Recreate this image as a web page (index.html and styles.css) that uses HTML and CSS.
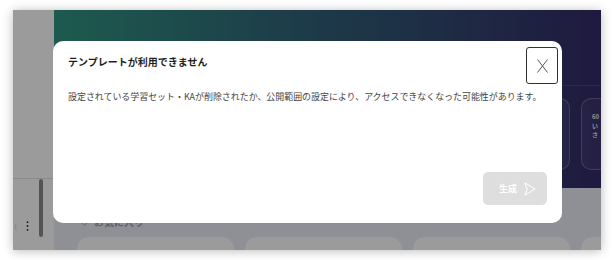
FILE: index.html
```html
<!DOCTYPE html>
<html lang="ja">
<head>
  <meta charset="UTF-8" />
  <meta name="viewport" content="width=device-width, initial-scale=1.0" />
  <title>テンプレートが利用できません</title>
  <link rel="stylesheet" href="styles.css">
</head>
<body>
  <div class="window">
    <aside class="sidebar">
      <div class="side-item">
        <span class="side-label">t</span>
        <span class="kebab">
          <svg width="3" height="10" viewBox="0 0 3 10"><circle cx="1.5" cy="1.2" r="0.9"/><circle cx="1.5" cy="5" r="0.9"/><circle cx="1.5" cy="8.8" r="0.9"/></svg>
        </span>
        <span class="scroll-thumb"></span>
      </div>
    </aside>

    <main class="main">
      <section class="hero">
        <div class="hero-top"></div>
        <div class="hero-cards">
          <div class="hero-card"></div>
          <div class="hero-card"></div>
          <div class="hero-card"></div>
          <div class="hero-card">
            <p>60</p>
            <p>い</p>
            <p>さ</p>
          </div>
        </div>
      </section>

      <section class="favs">
        <h4 class="favs-title">
          <svg width="9" height="8" viewBox="0 0 10 9"><path d="M5 8.2 1.3 4.6A2.2 2.2 0 0 1 5 1.6a2.2 2.2 0 0 1 3.7 3Z" fill="none" stroke="currentColor" stroke-width="1"/></svg>
          お気に入り
        </h4>
        <div class="fav-cards">
          <div class="fav-card"></div>
          <div class="fav-card"></div>
          <div class="fav-card"></div>
          <div class="fav-card"></div>
        </div>
      </section>
    </main>

    <div class="overlay"></div>

    <div class="modal">
      <div class="modal-head">
        <h3 class="modal-title">テンプレートが利用できません</h3>
        <button class="close-btn">
          <svg width="11" height="14" viewBox="0 0 11 14"><path d="M0.5 0.5 10.5 13.5M10.5 0.5 0.5 13.5" stroke="#555" stroke-width="1" fill="none"/></svg>
        </button>
      </div>
      <p class="modal-text">設定されている学習セット・KAが削除されたか、公開範囲の設定により、アクセスできなくなった可能性があります。</p>
      <div class="modal-foot">
        <button class="gen-btn">
          生成
          <svg width="12" height="14" viewBox="0 0 12 14"><path d="M0.8 0.8 11.2 7 0.8 13.2 3.2 7Z" fill="none" stroke="#fff" stroke-width="1" stroke-linejoin="round"/></svg>
        </button>
      </div>
    </div>
  </div>
</body>
</html>
```

FILE: styles.css
```css
* {
  margin: 0;
  padding: 0;
  box-sizing: border-box;
}

body {
  font-family: 'Noto Sans CJK JP', 'Noto Sans', sans-serif;
  background: #ffffff;
  padding: 10px 13px;
  color: #333;
}

.window {
  position: relative;
  height: 240px;
  display: flex;
  overflow: hidden;
  box-shadow: 0 1px 10px rgba(0, 0, 0, 0.28);
}

/* sidebar */
.sidebar {
  width: 41px;
  flex-shrink: 0;
  background: #fbfbfb;
  display: flex;
  flex-direction: column;
}

.side-item {
  margin-top: auto;
  height: 72px;
  border-top: 1px solid #dcdcdc;
  display: flex;
  align-items: flex-start;
  font-size: 8px;
}

.side-label {
  width: 10px;
  margin-top: 43px;
  padding-left: 1px;
  color: #d8d8d8;
  line-height: 9px;
}

.kebab {
  width: 8px;
  margin-top: 42px;
  display: flex;
  justify-content: center;
  fill: #222;
}

.scroll-thumb {
  width: 4px;
  height: 58px;
  margin-left: 8px;
  background: #888;
  border-radius: 2px;
}

/* main */
.main {
  flex: 1;
  min-width: 0;
  background: #e7e8f0;
  display: flex;
  flex-direction: column;
  overflow: hidden;
}

.hero {
  height: 178px;
  flex-shrink: 0;
  background: linear-gradient(90deg, #2f937f 0%, #306177 45%, #322a66 100%);
}

.hero-top {
  height: 76px;
  border-bottom: 1px solid rgba(255, 255, 255, 0.1);
}

.hero-cards {
  display: grid;
  grid-template-columns: repeat(4, 157px);
  gap: 11px;
  margin-top: 12px;
  padding-left: 23px;
}

.hero-card {
  height: 72px;
  border: 1px solid rgba(255, 255, 255, 0.22);
  background: rgba(255, 255, 255, 0.05);
  border-radius: 10px;
  padding: 14px 10px;
  color: rgba(255, 255, 255, 0.88);
  font-size: 6px;
  font-weight: bold;
  line-height: 8.8px;
}

.favs {
  padding: 28px 0 0 23px;
}

.favs-title {
  display: flex;
  align-items: center;
  gap: 5px;
  height: 12px;
  padding-left: 3px;
  font-size: 10px;
  line-height: 12px;
  font-weight: bold;
  color: #9a9ba4;
}

.fav-cards {
  display: grid;
  grid-template-columns: repeat(4, 157px);
  gap: 11px;
  margin-top: 9px;
}

.fav-card {
  height: 40px;
  background: #fafafa;
  border-radius: 12px;
}

.overlay {
  position: absolute;
  inset: 0;
  background: rgba(0, 0, 0, 0.38);
}

/* modal */
.modal {
  position: absolute;
  left: 40px;
  top: 31px;
  width: 509px;
  height: 182px;
  background: #fff;
  border-radius: 10px;
  padding: 6px 4px 18px 15px;
  display: flex;
  flex-direction: column;
}

.modal-head {
  display: flex;
  justify-content: space-between;
  align-items: flex-start;
}

.modal-title {
  margin-top: 8px;
  font-size: 10px;
  line-height: 14px;
  font-weight: bold;
  color: #1f1f1f;
}

.close-btn {
  width: 32px;
  height: 37px;
  border: 1.5px solid #333;
  border-radius: 3px;
  background: #fff;
  display: flex;
  align-items: center;
  justify-content: center;
}

.modal-text {
  margin-top: 6px;
  font-size: 8.95px;
  line-height: 14px;
  color: #444;
}

.modal-foot {
  margin-top: auto;
  display: flex;
  justify-content: flex-end;
  padding-right: 11px;
}

.gen-btn {
  width: 64px;
  height: 33px;
  border: none;
  border-radius: 5px;
  background: #dedede;
  color: #fff;
  font-family: inherit;
  font-size: 9px;
  font-weight: bold;
  display: flex;
  align-items: center;
  gap: 7px;
  padding-left: 16px;
}
```
